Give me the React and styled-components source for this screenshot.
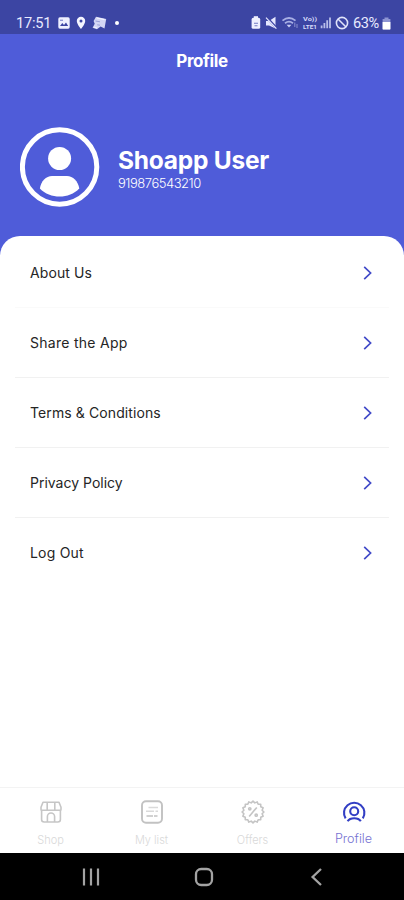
import React from "react";
import styled, { createGlobalStyle } from "styled-components";

const menu = [
  { label: "About Us", spacing: "0.1px", line: "#fafafa" },
  { label: "Share the App", spacing: "0.28px", line: "#f1f1f1" },
  { label: "Terms & Conditions", spacing: "0.1px", line: "#f1f1f1" },
  { label: "Privacy Policy", spacing: "0px", line: "#f1f1f1" },
  { label: "Log Out", spacing: "0.2px", line: "transparent" },
];

export default function App() {
  return (
    <Screen>
      <GlobalStyle />
      <StatusBar>
        <StatusLeft>
          <Clock>17:51</Clock>
          <ImageIcon />
          <PinIcon />
          <CardsIcon />
          <Dot />
        </StatusLeft>
        <StatusRight />
      </StatusBar>
      <Header>
        <Title>Profile</Title>
        <User>
          <Avatar />
          <UserText>
            <Name>Shoapp User</Name>
            <Phone>919876543210</Phone>
          </UserText>
        </User>
      </Header>
      <Sheet>
        {menu.map((item) => (
          <Row key={item.label} $line={item.line}>
            <Label $spacing={item.spacing}>{item.label}</Label>
            <svg width="10" height="16" viewBox="0 0 10 16" fill="none">
              <path d="M1.2 1.8L7.6 8L1.2 14.2" stroke="#4049c8" strokeWidth="1.7" />
            </svg>
          </Row>
        ))}
      </Sheet>
      <TabBar>
        <Tab>
          <ShopIcon />
          <TabText>Shop</TabText>
        </Tab>
        <Tab>
          <ListIcon />
          <TabText>My list</TabText>
        </Tab>
        <Tab>
          <OffersIcon />
          <TabText>Offers</TabText>
        </Tab>
        <Tab $active>
          <ProfileIcon />
          <TabText $active>Profile</TabText>
        </Tab>
      </TabBar>
      <SystemBar>
        <svg width="18" height="18" viewBox="0 0 18 18">
          <path d="M2 .5V17.5M9 .5V17.5M16 .5V17.5" stroke="#a3a3a3" strokeWidth="2.2" />
        </svg>
        <svg width="20" height="20" viewBox="0 0 20 20">
          <rect x="2" y="2" width="16" height="16" rx="5.2" fill="none" stroke="#a3a3a3" strokeWidth="2.3" />
        </svg>
        <svg width="18" height="18" viewBox="0 0 18 18">
          <path d="M13 1L4.6 9L13 17" fill="none" stroke="#a3a3a3" strokeWidth="2.3" />
        </svg>
      </SystemBar>
    </Screen>
  );
}

function ImageIcon() {
  return (
    <svg width="12" height="12" viewBox="0 0 12 12">
      <rect x=".3" y=".3" width="11.4" height="11.4" rx="1.6" fill="#eef0ff" />
      <path d="M2 9L4.3 6L6 8L8 5.4L10.2 9Z" fill="#3c45a3" />
      <path d="M2 2.6H5V4H2Z" fill="#9298d4" />
    </svg>
  );
}

function PinIcon() {
  return (
    <svg width="10" height="14" viewBox="0 0 10 14">
      <path d="M5 .8A4.2 4.2 0 0 0 .8 5C.8 8.2 5 13 5 13S9.2 8.2 9.2 5A4.2 4.2 0 0 0 5 .8Z" fill="#f4f5ff" />
      <circle cx="5" cy="5" r="1.5" fill="#3c45a3" />
    </svg>
  );
}

function CardsIcon() {
  return (
    <svg width="15" height="14" viewBox="0 0 15 14">
      <path d="M4 .8L14.2 3L12.5 12.5L8.6 10.6L5 13.2L.6 11.8L2.7 7.8L1.6 5Z" fill="#d3d6f4" />
      <path d="M3.5 5L8 5.8M5.2 8.8L8 9.2" stroke="#9aa0d8" strokeWidth="1" />
      <path d="M5 2L12.5 3.6M2 11L5 12" stroke="#f2f3ff" strokeWidth="1.2" />
    </svg>
  );
}

function StatusRight() {
  return (
    <StatusIcons>
      <svg width="84" height="16" viewBox="251 15 84 16" fill="none">
        {/* battery saver */}
        <rect x="251.6" y="17.8" width="8.6" height="11" rx="1.6" fill="#eff0ff" />
        <rect x="253.8" y="16.2" width="4.2" height="2" fill="#eff0ff" />
        <path d="M254 23.2H258M254.5 25.8H257.5" stroke="#7279c2" strokeWidth="1.1" />
        {/* muted */}
        <path d="M266 21H269L275.5 16.8V28.5L269 25.5H266Z" fill="#e5e7ff" />
        <path d="M266.4 17L277 28.5" stroke="#3c45a3" strokeWidth="2.4" />
        <path d="M266 17.6L276.4 28.6" stroke="#e5e7ff" strokeWidth="1.2" />
        {/* wifi */}
        <path d="M282.5 20.6Q289 15.4 295.5 20.6M285 23.2Q289 20 293 23.2" stroke="#a8afe4" strokeWidth="1.8" />
        <path d="M286.6 24.7H291.4L289 27.6Z" fill="#c9cef4" />
        <path d="M294.8 22.6V27M297 24V28" stroke="#8990d0" strokeWidth="1" />
        {/* signal */}
        <path d="M321.6 25.6V28.2M324.4 23V28.2M327.2 20.2V28.2M330 17.6V28.2" stroke="#b8bee9" strokeWidth="1.8" />
        <text x="303" y="21.4" textLength="14" lengthAdjust="spacingAndGlyphs" fill="#d5d9fa" fontFamily="Roboto, sans-serif" fontWeight="700" fontSize="5.6">Vo))</text>
        <text x="303" y="28.8" textLength="14" lengthAdjust="spacingAndGlyphs" fill="#d5d9fa" fontFamily="Roboto, sans-serif" fontWeight="700" fontSize="5.6">LTE1</text>
      </svg>
      <svg width="14" height="14" viewBox="0 0 14 14" fill="none" stroke="#e0e3fa" strokeWidth="1.6">
        <circle cx="7" cy="7" r="5.6" />
        <path d="M3 3L11 11" />
      </svg>
      <Percent>63%</Percent>
      <svg width="9" height="13" viewBox="0 0 9 13">
        <path d="M2.5 .4H6.5V2H8.4V12.6H.6V2H2.5Z" fill="#8d94d2" />
        <path d="M.6 5H8.4V11.4Q8.4 12.6 7.2 12.6H1.8Q.6 12.6 .6 11.4Z" fill="#fff" />
      </svg>
    </StatusIcons>
  );
}

function Avatar() {
  return (
    <svg width="80" height="80" viewBox="0 0 80 80">
      <circle cx="39.6" cy="40" r="37.2" fill="none" stroke="#fff" strokeWidth="5" />
      <circle cx="39.6" cy="31.5" r="11.5" fill="#fff" />
      <path d="M19.9 61.5C21 54 26 49 32 49H47C53 49 58 54 59.3 61.5C54 67 47 69.6 39.6 69.6S25 67 19.9 61.5Z" fill="#fff" />
    </svg>
  );
}

function ShopIcon() {
  return (
    <svg width="24" height="24" viewBox="0 0 24 24" fill="none" stroke="#c6c6c6" strokeWidth="1.6" strokeLinejoin="round">
      <path d="M4 2.2H20L22 7.2V9.4Q22 10.2 21 10.2H3Q2 10.2 2 9.4V7.2Z" />
      <path d="M8.2 10V2.2M15.8 10V2.2" />
      <path d="M2.6 10V19.6Q2.6 22 5.2 22H18.8Q21.4 22 21.4 19.6V10" />
      <path d="M8.4 22V16.6A3.6 3.6 0 0 1 15.6 16.6V22" />
    </svg>
  );
}

function ListIcon() {
  return (
    <svg width="24" height="24" viewBox="0 0 24 24" fill="none" stroke="#c2c2c2">
      <rect x="2" y="1.3" width="20" height="21.4" rx="4" strokeWidth="1.9" />
      <path d="M8.5 7.5H18M6 11.3H14M15.5 11.3H18" stroke="#dadada" strokeWidth="1.4" />
      <path d="M6.5 16H13M14 16H17.5" strokeWidth="1.5" />
    </svg>
  );
}

function OffersIcon() {
  // scalloped badge outline
  const points = Array.from({ length: 33 }, (_, i) => {
    const angle = (i * Math.PI) / 16;
    const r = i % 2 ? 9.3 : 10.9;
    return `${12 + r * Math.cos(angle)},${12 + r * Math.sin(angle)}`;
  }).join(" ");
  return (
    <svg width="24" height="24" viewBox="0 0 24 24" fill="none" stroke="#c4c4c4" strokeWidth="1.6" strokeLinejoin="round">
      <polygon points={points} />
      <path d="M15.8 7.4L8.2 16.6" />
      <circle cx="8.8" cy="8.8" r="1.1" />
      <circle cx="15.2" cy="15.2" r="1.1" />
    </svg>
  );
}

function ProfileIcon() {
  return (
    <svg width="24" height="24" viewBox="0 0 24 24" fill="none" stroke="#323ec4" strokeWidth="2.1">
      <path d="M3.6 18.4A10.2 10.2 0 1 1 20.8 18.4" />
      <circle cx="12.2" cy="11.2" r="4" />
      <path d="M5.6 21.2C7 19 9.2 18.2 12.2 18.2S17.4 19 18.8 21.2" />
    </svg>
  );
}

const GlobalStyle = createGlobalStyle`
  * {
    box-sizing: border-box;
  }
  body {
    margin: 0;
  }
  svg {
    display: block;
    flex-shrink: 0;
  }
`;

const Screen = styled.div`
  display: flex;
  flex-direction: column;
  height: 900px;
  background-color: #4f5cd9;
  font-family: "Inter", "Open Sans", sans-serif;
  overflow: hidden;
`;

const StatusBar = styled.div`
  display: flex;
  justify-content: space-between;
  height: 34px;
  padding: 12px 14px 0 16px;
  background-color: #3c45a3;
  color: #e8eaff;
  font-family: "Roboto", sans-serif;
`;

const StatusLeft = styled.div`
  display: flex;
  align-items: center;
  height: 22px;
  gap: 6px;
`;

const Clock = styled.span`
  width: 36px;
  font-size: 14.6px;
  letter-spacing: -0.2px;
`;

const Dot = styled.span`
  width: 4px;
  height: 4px;
  margin-left: 2px;
  border-radius: 50%;
  background-color: #fff;
`;

const StatusIcons = styled.div`
  display: flex;
  align-items: center;
  height: 22px;
  margin-right: -1px;
`;

const Percent = styled.span`
  width: 27px;
  margin-left: 4px;
  margin-right: 2px;
  font-size: 14.6px;
  letter-spacing: -0.5px;
`;

const Header = styled.header`
  height: 202px;
  color: #fff;
`;

const Title = styled.h1`
  margin: 0;
  padding-top: 16px;
  font-size: 17px;
  line-height: 22px;
  font-weight: 700;
  letter-spacing: -0.4px;
  text-align: center;
`;

const User = styled.div`
  display: flex;
  align-items: center;
  gap: 18px;
  padding: 55px 20px 0;
`;

const UserText = styled.div`
  padding-top: 4px;
`;

const Name = styled.h2`
  margin: 0;
  font-size: 24.5px;
  line-height: 28px;
  font-weight: 700;
  letter-spacing: -0.25px;
`;

const Phone = styled.p`
  margin: 0;
  font-size: 13px;
  line-height: 18px;
  font-weight: 300;
  letter-spacing: -0.48px;
`;

const Sheet = styled.main`
  flex: 1;
  padding: 2px 15px 0;
  background-color: #fff;
  border-radius: 20px 20px 0 0;
`;

const Row = styled.div`
  display: flex;
  align-items: center;
  justify-content: space-between;
  height: 70px;
  padding: 0 16px 0 15px;
  border-bottom: 1px solid ${({ $line }) => $line};
`;

const Label = styled.span`
  color: #252525;
  font-size: 14px;
  letter-spacing: ${({ $spacing }) => $spacing};
`;

const TabBar = styled.nav`
  display: flex;
  height: 66px;
  border-top: 1px solid #f3f3f3;
  background-color: #fff;
`;

const Tab = styled.div`
  flex: 1;
  display: flex;
  flex-direction: column;
  align-items: center;
  padding-top: 12px;
  gap: ${({ $active }) => ($active ? "7px" : "8px")};
`;

const TabText = styled.span`
  color: ${({ $active }) => ($active ? "#7672d2" : "#d9d9d9")};
  font-size: ${({ $active }) => ($active ? "12.6px" : "11px")};
  line-height: 16px;
  font-weight: 300;
`;

const SystemBar = styled.footer`
  display: flex;
  align-items: center;
  justify-content: center;
  gap: 94px;
  height: 47px;
  padding-left: 4px;
  background-color: #000;
`;
